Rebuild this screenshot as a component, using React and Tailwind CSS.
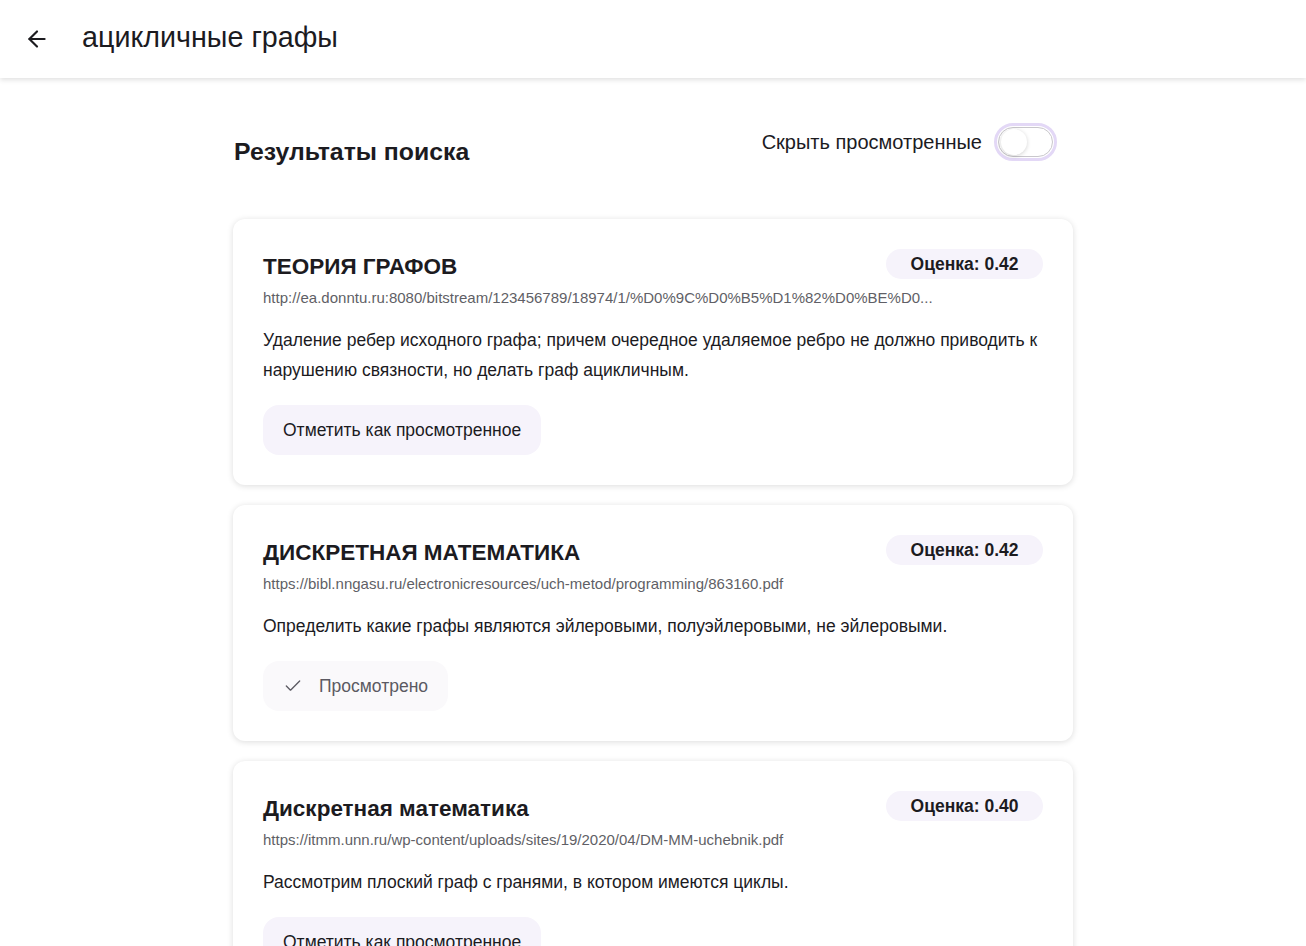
import React, { useState } from 'react';
import { ArrowLeft, Check } from 'lucide-react';

const results = [
  {
    title: 'ТЕОРИЯ ГРАФОВ',
    url: 'http://ea.donntu.ru:8080/bitstream/123456789/18974/1/%D0%9C%D0%B5%D1%82%D0%BE%D0...',
    text: 'Удаление ребер исходного графа; причем очередное удаляемое ребро не должно приводить к нарушению связности, но делать граф ацикличным.',
    score: '0.42',
    viewed: false,
  },
  {
    title: 'ДИСКРЕТНАЯ МАТЕМАТИКА',
    url: 'https://bibl.nngasu.ru/electronicresources/uch-metod/programming/863160.pdf',
    text: 'Определить какие графы являются эйлеровыми, полуэйлеровыми, не эйлеровыми.',
    score: '0.42',
    viewed: true,
  },
  {
    title: 'Дискретная математика',
    url: 'https://itmm.unn.ru/wp-content/uploads/sites/19/2020/04/DM-MM-uchebnik.pdf',
    text: 'Рассмотрим плоский граф с гранями, в котором имеются циклы.',
    score: '0.40',
    viewed: false,
  },
];

const ResultCard = ({ item }) => (
  <div className="bg-white rounded-xl shadow-[0_1px_6px_rgba(0,0,0,0.14)] px-[30px] pt-[30px] pb-[30px]">
    <div className="flex items-start justify-between">
      <h3 className="text-[22.5px] leading-[36px] font-bold text-[#1c1b1f]">{item.title}</h3>
      <span className="bg-[#f6f3fb] rounded-full px-[24.5px] h-[30px] flex items-center text-[17.5px] font-bold text-[#1c1b1f]">
        Оценка: {item.score}
      </span>
    </div>
    <div className="text-[15px] leading-[20px] text-[#5f5f66] mt-[3px]">{item.url}</div>
    <p className="text-[17.5px] leading-[30px] text-[#1c1b1f] mt-[17px]">{item.text}</p>
    {item.viewed ? (
      <button className="mt-[20px] h-[50px] px-[20px] rounded-2xl bg-[#faf9fb] flex items-center gap-[16px] text-[17.5px] text-[#5b5a62]">
        <Check className="w-[20px] h-[20px]" strokeWidth={1.6} />
        Просмотрено
      </button>
    ) : (
      <button className="mt-[20px] h-[50px] px-[20px] rounded-2xl bg-[#f6f3fb] text-[17.5px] text-[#1c1b1f]">
        Отметить как просмотренное
      </button>
    )}
  </div>
);

export default function App() {
  const [hide, setHide] = useState(false);

  return (
    <div className="min-h-screen bg-white" style={{ fontFamily: '"Liberation Sans", Arial, sans-serif' }}>
      <header className="h-[78px] flex items-center shadow-[0_2px_5px_rgba(0,0,0,0.12)] bg-white">
        <ArrowLeft className="ml-[24px] w-[26px] h-[26px] text-[#1c1b1f]" strokeWidth={2} />
        <h1 className="ml-[32px] mb-[2px] text-[28.7px] text-[#1c1b1f]">ацикличные графы</h1>
      </header>

      <main className="w-[840px] mx-auto pt-[45px]">
        <div className="flex items-start justify-between">
          <h2 className="mt-[11px] ml-[1px] text-[24.8px] leading-[36px] font-bold text-[#1c1b1f]">Результаты поиска</h2>
          <div className="flex items-center gap-[12px] mr-[16px]">
            <span className="text-[20px] text-[#1c1b1f]">Скрыть просмотренные</span>
            <button
              onClick={() => setHide(!hide)}
              className="w-[63px] h-[38px] rounded-full border-[3px] border-[#e3d8f6] p-[1px]"
            >
              <div className="w-full h-full rounded-full border border-[#c9c7cc] bg-white flex items-center px-[2px]">
                <div className="w-[26px] h-[26px] rounded-full bg-white shadow-[0_1px_4px_rgba(0,0,0,0.18)]" />
              </div>
            </button>
          </div>
        </div>

        <div className="mt-[49px] flex flex-col gap-[20px] pb-[40px]">
          {results.map((r, i) => (
            <ResultCard key={i} item={r} />
          ))}
        </div>
      </main>
    </div>
  );
}
